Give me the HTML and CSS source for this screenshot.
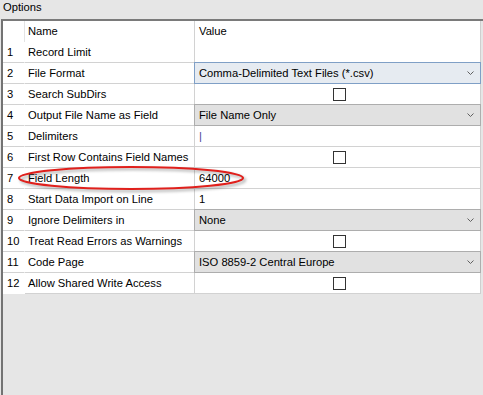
FILE: index.html
```html
<!DOCTYPE html>
<html lang="en">

<head>
    <meta charset="UTF-8">
    <meta name="viewport" content="width=device-width, initial-scale=1.0">
    <title>Options</title>
    <link rel="stylesheet" href="styles.css">
</head>

<body>
    <div class="title">Options</div>
    <div class="panel">
        <div class="grid">
            <div class="row head">
                <div class="num"></div>
                <div class="name">Name</div>
                <div class="value">Value</div>
            </div>
            <div class="row">
                <div class="num">1</div>
                <div class="name">Record Limit</div>
                <div class="value"></div>
            </div>
            <div class="row">
                <div class="num">2</div>
                <div class="name">File Format</div>
                <div class="value pick">
                    <div class="combo active"><span>Comma-Delimited Text Files (*.csv)</span><svg width="7" height="4" viewBox="0 0 7 4"><polyline points="0.5,0.5 3.5,3.5 6.5,0.5" /></svg></div>
                </div>
            </div>
            <div class="row">
                <div class="num">3</div>
                <div class="name">Search SubDirs</div>
                <div class="value check"><span class="box"></span></div>
            </div>
            <div class="row">
                <div class="num">4</div>
                <div class="name">Output File Name as Field</div>
                <div class="value pick">
                    <div class="combo"><span>File Name Only</span><svg width="7" height="4" viewBox="0 0 7 4"><polyline points="0.5,0.5 3.5,3.5 6.5,0.5" /></svg></div>
                </div>
            </div>
            <div class="row">
                <div class="num">5</div>
                <div class="name">Delimiters</div>
                <div class="value"><span class="pipe">|</span></div>
            </div>
            <div class="row">
                <div class="num">6</div>
                <div class="name">First Row Contains Field Names</div>
                <div class="value check"><span class="box"></span></div>
            </div>
            <div class="row">
                <div class="num">7</div>
                <div class="name">Field Length</div>
                <div class="value">64000</div>
            </div>
            <div class="row">
                <div class="num">8</div>
                <div class="name">Start Data Import on Line</div>
                <div class="value">1</div>
            </div>
            <div class="row">
                <div class="num">9</div>
                <div class="name">Ignore Delimiters in</div>
                <div class="value pick">
                    <div class="combo"><span>None</span><svg width="7" height="4" viewBox="0 0 7 4"><polyline points="0.5,0.5 3.5,3.5 6.5,0.5" /></svg></div>
                </div>
            </div>
            <div class="row">
                <div class="num">10</div>
                <div class="name">Treat Read Errors as Warnings</div>
                <div class="value check"><span class="box"></span></div>
            </div>
            <div class="row">
                <div class="num">11</div>
                <div class="name">Code Page</div>
                <div class="value pick">
                    <div class="combo"><span>ISO 8859-2 Central Europe</span><svg width="7" height="4" viewBox="0 0 7 4"><polyline points="0.5,0.5 3.5,3.5 6.5,0.5" /></svg></div>
                </div>
            </div>
            <div class="row last">
                <div class="num">12</div>
                <div class="name">Allow Shared Write Access</div>
                <div class="value check"><span class="box"></span></div>
            </div>
        </div>
        <!-- red circle drawn round the Field Length row -->
        <svg class="mark" width="236" height="32" viewBox="0 0 236 32">
            <ellipse cx="116" cy="15" rx="112" ry="11" />
        </svg>
    </div>
</body>

</html>
```

FILE: styles.css
```css
* {
    margin: 0;
    padding: 0;
    box-sizing: border-box;
}
body{
    background-color: #e6e6e6;
    font-family: "Liberation Sans", Arial, sans-serif;
    font-size: 11.2px;
    color: #000;
}
.title{
    height: 19px;
    padding-left: 3px;
    line-height: 15px;
}
.panel{
    position: relative;
    margin-left: 1px;
    min-height: calc(100vh - 19px);
    border-top: 2px solid #7a7a7a;
    border-left: 2px solid #737373;
}
.grid{
    width: 478px;
    background-color: #fff;
    border-right: 1px solid #cfcfcf;
}
.row{
    display: flex;
    height: 21px;
    line-height: 20px;
}
.row .num,.row .name,.row .value{
    height: 21px;
    border-bottom: 1px solid #d2d2d2;
}
.head .num,.head .name,.head .value{
    border-bottom: none;
}
.last .num{
    border-bottom: none;
}
.num{
    width: 22px;
    padding-left: 4px;
    border-right: 1px solid #fff;
}
.head .num{
    border-right: 1px solid #e3e3e3;
}
.name{
    width: 170px;
    padding-left: 3px;
    border-right: 1px solid #d2d2d2;
    white-space: nowrap;
}
.value{
    flex: 1;
    padding-left: 4px;
}
.pick{
    padding-left: 0;
}
.check{
    display: flex;
    justify-content: center;
    align-items: center;
}
.box{
    width: 13px;
    height: 13px;
    border: 1px solid #333;
    background-color: #fff;
}
.pipe{
    color: #4b3f96;
}
.combo{
    display: flex;
    justify-content: space-between;
    align-items: center;
    height: 22px;
    margin: -1px -1px 0 -1px;
    padding: 0 6px 0 4px;
    background-color: #e1e1e1;
    border: 1px solid #adadad;
    line-height: 20px;
}
.combo.active{
    background-color: #e6ebf1;
    border-color: #7f9fc6;
}
.combo svg polyline{
    fill: none;
    stroke: #606060;
    stroke-width: 1;
}
.mark{
    position: absolute;
    left: 12px;
    top: 142px;
    overflow: visible;
    filter: drop-shadow(2px 2px 1.5px rgba(0, 0, 0, 0.35));
}
.mark ellipse{
    fill: none;
    stroke: #e0201c;
    stroke-width: 2.2;
}
```
